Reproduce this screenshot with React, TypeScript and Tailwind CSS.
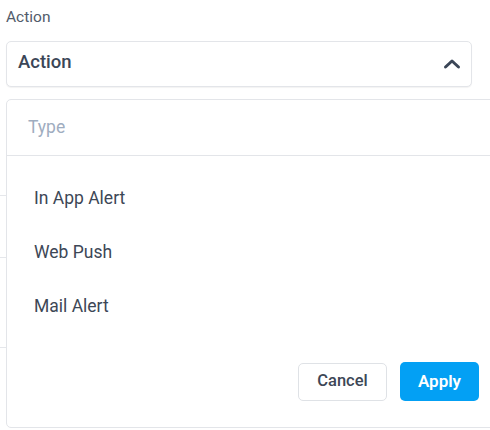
import React from "react";

export default function App() {
  return (
    <div
      className="relative w-[490px] h-[430px] overflow-hidden bg-white"
      style={{ fontFamily: "Roboto, 'Liberation Sans', sans-serif" }}
    >
      {/* table rows hidden beneath the dropdown */}
      <div className="absolute inset-0 z-0">
        <div className="absolute left-0 top-[195px] w-full h-px bg-[#e5e7eb]" />
        <div className="absolute left-0 top-[257px] w-full h-px bg-[#e5e7eb]" />
        <div className="absolute left-0 top-[347px] w-full h-px bg-[#e5e7eb]" />
      </div>

      <div className="relative z-10 flex flex-col pl-[6px] pt-[7px]">
        <div className="text-[15.5px] leading-[20px] text-[#525c6b]">Action</div>

        <div className="mt-[14px] w-[466px] h-[46px] flex items-center justify-between rounded-[5px] border border-[#e3e5e9] bg-white pl-[11px] pr-[10px] shadow-[0_1px_1px_rgba(0,0,0,0.05)]">
          <span className="text-[18.5px] leading-[24px] font-medium text-[#3b4657] -translate-y-[2px]">Action</span>
          <svg width="18" height="12" viewBox="0 0 18 12" className="-translate-y-[0.5px]">
            <path
              d="M2.5 9.5 L9 3.5 L15.5 9.5"
              fill="none"
              stroke="#3b4657"
              strokeWidth="3"
              strokeLinecap="round"
              strokeLinejoin="round"
            />
          </svg>
        </div>

        <div className="mt-[12px] w-[492px] h-[329px] flex flex-col rounded-[5px] border border-[#e3e5e9] bg-white">
          <div className="h-[56px] flex items-center pl-[21px] border-b border-[#e3e5e9]">
            <span className="text-[17.5px] text-[#9fadc0]">Type</span>
          </div>
          <div className="flex flex-col pl-[27px] pt-[28px]">
            <div className="h-[28px] flex items-center text-[17.5px] text-[#3d4756]">In App Alert</div>
            <div className="h-[28px] mt-[26px] flex items-center text-[17.5px] text-[#3d4756]">Web Push</div>
            <div className="h-[28px] mt-[26px] flex items-center text-[17.5px] text-[#3d4756]">Mail Alert</div>
          </div>
          <div className="mt-auto mb-[26px] flex justify-end items-center gap-[13px] pr-[18px]">
            <button className="w-[89px] h-[38px] rounded-[5px] border border-[#dfe2e6] bg-white text-[16.5px] font-medium text-[#3d4756]">
              Cancel
            </button>
            <button className="w-[79px] h-[39px] rounded-[5px] bg-[#03a0f4] text-[17px] font-semibold text-white">
              Apply
            </button>
          </div>
        </div>
      </div>
    </div>
  );
}
